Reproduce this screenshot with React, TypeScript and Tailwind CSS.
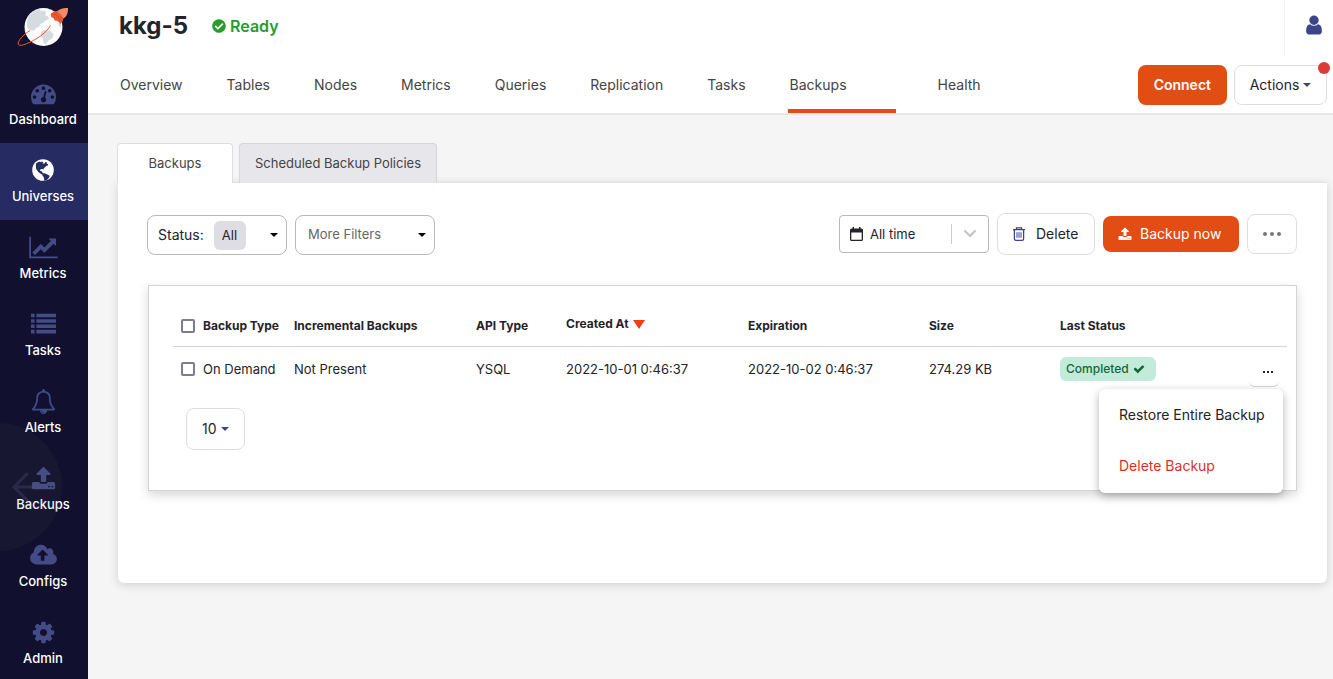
import type { ReactNode } from 'react';
import { clsx } from 'clsx';
import { FaCheckCircle } from 'react-icons/fa';

const ICONS = {
  dashboard:
    'M384 1152q0-53-37.5-90.5t-90.5-37.5-90.5 37.5-37.5 90.5 37.5 90.5 90.5 37.5 90.5-37.5 37.5-90.5zm192-448q0-53-37.5-90.5t-90.5-37.5-90.5 37.5-37.5 90.5 37.5 90.5 90.5 37.5 90.5-37.5 37.5-90.5zm428 481l101-382q6-26-7.5-48.5t-38.5-29.5-48 6.5-30 39.5l-101 382q-60 5-107 43.5t-63 98.5q-20 77 20 146t117 89 146-20 89-117q16-60-6-117t-72-91zm660-33q0-53-37.5-90.5t-90.5-37.5-90.5 37.5-37.5 90.5 37.5 90.5 90.5 37.5 90.5-37.5 37.5-90.5zm-640-640q0-53-37.5-90.5t-90.5-37.5-90.5 37.5-37.5 90.5 37.5 90.5 90.5 37.5 90.5-37.5 37.5-90.5zm448 192q0-53-37.5-90.5t-90.5-37.5-90.5 37.5-37.5 90.5 37.5 90.5 90.5 37.5 90.5-37.5 37.5-90.5zm320 448q0 261-141 483-19 29-54 29h-1402q-35 0-54-29-141-221-141-483 0-182 71-348t191-286 286-191 348-71 348 71 286 191 191 286 71 348z',
  chart:
    'M2048 1536v128h-2048v-1536h128v1408h1920zm-128-1248v435q0 21-19.5 29.5t-35.5-7.5l-121-121-633 633q-10 10-23 10t-23-10l-233-233-416 416-192-192 585-585q10-10 23-10t23 10l233 233 464-464-121-121q-16-16-7.5-35.5t29.5-19.5h435q14 0 23 9t9 23z',
  list:
    'M0 1280h256v256h-256zM0 896h256v256h-256zM0 512h256v256h-256zM0 128h256v256h-256zM384 1280h1408v256h-1408zM384 896h1408v256h-1408zM384 512h1408v256h-1408zM384 128h1408v256h-1408z',
  bell:
    'M912 1696q0-16-16-16-59 0-101.5-42.5t-42.5-101.5q0-16-16-16t-16 16q0 73 51.5 124.5t124.5 51.5q16 0 16-16zm-666-288h1300q-266-300-266-832 0-51-24-105t-69-103-121.5-80.5-169.5-31.5-169.5 31.5-121.5 80.5-69 103-24 105q0 532-266 832zm1482 0q0 52-38 90t-90 38h-448q0 106-75 181t-181 75-181-75-75-181h-448q-52 0-90-38t-38-90q50-42 91-88t85-119.5 74.5-158.5 50-206 19.5-260q0-152 117-282.5t307-158.5q-8-19-8-39 0-40 28-68t68-28 68 28 28 68q0 20-8 39 190 28 307 158.5t117 282.5q0 139 19.5 260t50 206 74.5 158.5 85 119.5 91 88z',
  upload:
    'M1344 1472q0-26-19-45t-45-19-45 19-19 45 19 45 45 19 45-19 19-45zm256 0q0-26-19-45t-45-19-45 19-19 45 19 45 45 19 45-19 19-45zm128-224v320q0 40-28 68t-68 28h-1472q-40 0-68-28t-28-68v-320q0-40 28-68t68-28h427q21 56 70.5 92t110.5 36h256q61 0 110.5-36t70.5-92h427q40 0 68 28t28 68zm-325-648q-17 40-59 40h-256v448q0 26-19 45t-45 19h-256q-26 0-45-19t-19-45v-448h-256q-42 0-59-40-17-39 14-69l448-448q18-19 45-19t45 19l448 448q31 30 14 69z',
  cloud:
    'M1280 864q0-14-9-23l-352-352q-9-9-23-9t-23 9l-351 351q-10 12-10 24 0 14 9 23t23 9h224v352q0 13 9.5 22.5t22.5 9.5h192q13 0 22.5-9.5t9.5-22.5v-352h224q13 0 22.5-9.5t9.5-22.5zm640 288q0 159-112.5 271.5t-271.5 112.5h-1088q-185 0-316.5-131.5t-131.5-316.5q0-130 70-240t188-165q-2-30-2-43 0-212 150-362t362-150q156 0 285.5 87t188.5 231q71-62 166-62 106 0 181 75t75 181q0 76-41 138 130 31 213.5 135.5t83.5 238.5z',
  cog:
    'M1152 896q0-106-75-181t-181-75-181 75-75 181 75 181 181 75 181-75 75-181zm512-109v222q0 12-8 23t-20 13l-185 28q-19 54-39 91 35 50 107 138 10 12 10 25t-9 23q-27 37-99 108t-94 71q-12 0-26-9l-138-108q-44 23-91 38-16 136-29 186-7 28-36 28h-222q-14 0-24.5-8.5t-11.5-21.5l-28-184q-49-16-90-37l-141 107q-10 9-25 9-14 0-25-11-126-114-165-168-7-10-7-23 0-12 8-23 15-21 51-66.5t54-70.5q-27-50-41-99l-183-27q-13-2-21-12.5t-8-23.5v-222q0-12 8-23t19-13l186-28q14-46 39-92-40-57-107-138-10-12-10-24 0-10 9-23 26-36 98.5-107.5t94.5-71.5q13 0 26 10l138 107q44-23 91-38 16-136 29-186 7-28 36-28h222q14 0 24.5 8.5t11.5 21.5l28 184q49 16 90 37l142-107q9-9 24-9 13 0 25 10 129 119 165 170 7 8 7 22 0 12-8 23-15 21-51 66.5t-54 70.5q26 50 41 98l183 28q13 2 21 12.5t8 23.5z',
  user:
    'M1536 1399q0 109-62.5 187t-150.5 78h-854q-88 0-150.5-78t-62.5-187q0-85 8.5-160.5t31.5-152 58.5-131 94-89 134.5-34.5q131 128 313 128t313-128q76 0 134.5 34.5t94 89 58.5 131 31.5 152 8.5 160.5zm-256-887q0 159-112.5 271.5t-271.5 112.5-271.5-112.5-112.5-271.5 112.5-271.5 271.5-112.5 271.5 112.5 112.5 271.5z',
  check:
    'M1671 566q0 40-28 68l-724 724-136 136q-28 28-68 28t-68-28l-136-136-362-362q-28-28-28-68t28-68l136-136q28-28 68-28t68 28l294 295 656-657q28-28 68-28t68 28l136 136q28 28 28 68z',
};

function Glyph({ name, className, viewBox = '0 0 1792 1792' }: { name: keyof typeof ICONS; className?: string; viewBox?: string }) {
  return (
    <svg viewBox={viewBox} className={className} fill="currentColor" aria-hidden="true">
      <path d={ICONS[name]} />
    </svg>
  );
}

function Globe() {
  return (
    <svg viewBox="0 0 24 24" className="size-6" aria-hidden="true">
      <circle cx="12" cy="12" r="10.8" fill="#fff" />
      <path
        fill="#262b62"
        d="M5 5.600 6.800 4.200 9 3.400l.6.8 1.200-.6 1.400.6-.6 1.200 1.600.2.9-.6.2-1.200 1.600.6-.2 1 1.400.8-.1 1.200-1.400.4-1.300 1.100-1.300 1-.5 1.600-1.200-.6-1.800.3-.4 1.600 1 .8.9-.6.3 1.400 1 .9 1.800.2 2.300 1 2.300 1.200-.7 2-1.600 1.700-1.600 1.200-1.400.3-.3-1.800-.4-2-1.200-1.300-.2-1.200-1.600-.8-1.800-1.300-1.600-2-1.200-1.700-.3-2.600Z"
      />
    </svg>
  );
}

function Logo() {
  return (
    <svg viewBox="0 0 52 42" className="h-[42px] w-[52px]" aria-hidden="true">
      <circle cx="26.5" cy="21" r="19" fill="#fdfdfd" />
      <path
        fill="#d5dbde"
        d="M12 9.500 17 5l5.500-2.200 1.500 2.400 3-.8 2 1.800-1 3 3 1.400 1 2.400-3.400 1.400-2.600 2.400-2.800 1.200-1 3-3 .8-2.200 3-3.600-.6-3-2.400-.8-4.400ZM24 26l4-2.200 5 1.200 3.600 3-1 4-4 2.600-2.600 3.400-2.600-1-.4-4.600-2.400-3ZM41 14l3 4 .6 4-2.800-2Z"
      />
      <path
        fill="none"
        stroke="#e8582f"
        strokeWidth="1"
        d="M13 24.500C6 29 .5 35 1.200 38.200 2 41.600 14 36.800 24 29.600 28 26.600 32 22.500 33.500 19.400"
      />
      <path fill="#e8582f" d="m33.600 8 3.200-2.600 5.200-1 4.600 5.200-.8 5.400-2.400 3-1.800-2.200-2-1-2-.2-1-2.600-2.200-.8Z" />
      <path fill="#f58a68" d="M40 6C42 3.400 45 2 51 2c.2 5-1.200 8.600-4.500 10.500Z" />
      <path fill="none" stroke="#c84a26" strokeWidth=".7" d="M36 8.400c3-.6 6.600 2.600 6.800 6.400M38.800 6.200c3.400.2 6 2.800 6.200 6" />
    </svg>
  );
}

function Caret({ className }: { className?: string }) {
  return (
    <svg viewBox="0 0 8 4" className={clsx('h-1 w-2 shrink-0', className)} fill="currentColor" aria-hidden="true">
      <path d="M0 0h8L4 4z" />
    </svg>
  );
}

const navItems: { label: string; icon: ReactNode; active?: boolean }[] = [
  { label: 'Dashboard', icon: <Glyph name="dashboard" className="size-[25px]" /> },
  { label: 'Universes', icon: <Globe />, active: true },
  { label: 'Metrics', icon: <Glyph name="chart" viewBox="0 0 2048 1792" className="h-[25px] w-[29px]" /> },
  { label: 'Tasks', icon: <Glyph name="list" className="size-[25px]" /> },
  { label: 'Alerts', icon: <Glyph name="bell" className="size-[25px]" /> },
  { label: 'Backups', icon: <Glyph name="upload" className="size-[25px]" /> },
  { label: 'Configs', icon: <Glyph name="cloud" viewBox="0 0 1920 1792" className="h-[25px] w-[27px]" /> },
  { label: 'Admin', icon: <Glyph name="cog" className="size-[25px]" /> },
];

const tabs = ['Overview', 'Tables', 'Nodes', 'Metrics', 'Queries', 'Replication', 'Tasks', 'Backups', 'Health'];

function Sidebar() {
  return (
    <aside className="relative h-screen w-[88px] shrink-0 overflow-hidden bg-[#11112f] text-[#444c88]">
      <a href="#home" aria-label="Home" className="flex h-[66px] items-start justify-center pt-1.5 pr-0.5">
        <Logo />
      </a>
      <nav>
        {navItems.map((item) => (
          <a
            key={item.label}
            href={`#${item.label.toLowerCase()}`}
            className={clsx('flex h-[77px] flex-col items-center pt-[15px] pr-0.5', item.active && 'bg-[#262b62]')}
          >
            <span className="flex h-6 items-center justify-center">{item.icon}</span>
            <span className="mt-[5px] text-[13px] leading-[18px] font-medium text-white">{item.label}</span>
          </a>
        ))}
      </nav>
      {/* Back gesture indicator */}
      <svg viewBox="0 0 64 130" className="pointer-events-none absolute top-[422px] left-0 h-[130px] w-16" aria-hidden="true">
        <circle cx="-2" cy="65" r="64" fill="#555" fillOpacity=".09" />
        <path d="M40 65H14M27 52 14 65l13 13" fill="none" stroke="#55557a" strokeOpacity=".3" strokeWidth="3" strokeLinecap="round" />
      </svg>
    </aside>
  );
}

function Header() {
  return (
    <header className="flex h-[115px] flex-col border-b-2 border-[#e8e8e8] bg-white">
      <div className="flex h-14 items-start justify-between">
        <div className="flex h-[52px] items-center gap-6 pl-[31px]">
          <h1 className="text-2xl font-bold text-[#232329]">kkg-5</h1>
          <span className="flex items-center gap-1 text-base font-semibold text-[#289b2e]">
            <FaCheckCircle className="size-3.5" />
            Ready
          </span>
        </div>
        <button type="button" aria-label="Account" className="flex h-14 w-[49px] items-start justify-end border-l border-[#f0f0f0] pt-3.5 pr-2 text-[#3d4489]">
          <Glyph name="user" className="size-[22px]" />
        </button>
      </div>
      <div className="flex flex-1 items-stretch justify-between pr-1.5 pl-[30px]">
        <nav className="flex gap-10">
          {tabs.map((tab) => (
            <a
              key={tab}
              href={`#${tab.toLowerCase()}`}
              className={clsx(
                'border-b-4 px-0.5 pt-[18px] text-sm leading-[22px] text-[#444444]',
                tab === 'Backups' ? 'w-[108px] border-[#e24d13]' : 'border-transparent',
              )}
            >
              {tab}
            </a>
          ))}
        </nav>
        <div className="flex gap-[7px] pt-[9px]">
          <button type="button" className="h-10 rounded-lg bg-[#e24d13] px-4 text-sm font-semibold text-white">
            Connect
          </button>
          <button type="button" className="relative flex h-10 w-[93px] items-center justify-center gap-1 rounded-lg border border-[#dedee0] text-sm text-[#232329]">
            Actions
            <Caret className="text-[#3d4489]" />
            <span className="absolute -top-1 -right-1 size-3 rounded-full bg-[#dc3c37]" />
          </button>
        </div>
      </div>
    </header>
  );
}

function Toolbar() {
  return (
    <div className="flex items-center justify-between">
      <div className="mt-0.5 flex gap-2">
        <label className="flex h-10 w-[140px] items-center rounded-lg border border-[#b9b9bd] pr-2 pl-2.5 text-sm text-[#232329]">
          Status:
          <select className="mr-auto ml-2.5 h-[29px] appearance-none rounded-md bg-[#dedde3] px-2 text-[13px]">
            <option>All</option>
          </select>
          <Caret className="text-black" />
        </label>
        <label className="flex h-10 w-[140px] items-center rounded-lg border border-[#b9b9bd] pr-2 pl-3 text-[#666666]">
          <select aria-label="More Filters" className="mr-auto appearance-none text-[13px]">
            <option>More Filters</option>
          </select>
          <Caret className="text-black" />
        </label>
      </div>

      <div className="flex items-center gap-2 text-sm text-[#232329]">
        <label className="flex h-[38px] w-[150px] items-center rounded border border-[#b9b9bd] pl-2.5">
          <svg viewBox="0 0 13 14" className="h-3.5 w-[13px]" aria-hidden="true">
            <path fill="#232329" fillRule="evenodd" d="M1.500 1.500h10A1.500 1.500 0 0 1 13 3v9.500A1.500 1.500 0 0 1 11.500 14h-10A1.500 1.500 0 0 1 0 12.500V3A1.500 1.500 0 0 1 1.500 1.500ZM1.300 5.500v7.200h10.400V5.500Z" />
            <path fill="#232329" d="M2.500 0H4v3H2.500ZM9 0h1.500v3H9Z" />
          </svg>
          <select aria-label="Time range" className="mr-auto ml-[7px] appearance-none text-[13px]">
            <option>All time</option>
          </select>
          <span className="h-5 w-px bg-[#cccccc]" />
          <svg viewBox="0 0 12 8" className="mx-3 h-2 w-3" fill="none" stroke="#c4c4c4" strokeWidth="2" strokeLinecap="round" aria-hidden="true">
            <path d="m1 1 5 5 5-5" />
          </svg>
        </label>
        <button type="button" className="flex h-[42px] w-[98px] items-center gap-[11px] rounded-lg border border-[#dedee0] pl-[15px]">
          <svg viewBox="0 0 12 14" className="h-3.5 w-3" fill="none" stroke="#3d4489" strokeWidth="1.3" aria-hidden="true">
            <path d="M0 2.700h12M3.500 2.700V.8h5v1.900M1.400 2.700v9q0 1.600 1.600 1.600h6q1.600 0 1.600-1.600v-9" />
            <path strokeWidth="1" d="M4 5.200v5.600M6 5.200v5.600M8 5.200v5.600" />
          </svg>
          Delete
        </button>
        <button type="button" className="flex h-9 w-[136px] items-center gap-2 rounded-lg bg-[#e24d13] pl-[15px] text-white">
          <Glyph name="upload" className="size-3.5" />
          Backup now
        </button>
        <button type="button" aria-label="More options" className="flex h-10 w-[50px] items-center justify-center gap-[3px] rounded-lg border border-[#dedee0]">
          <span className="size-1 rounded-full bg-[#777777]" />
          <span className="size-1 rounded-full bg-[#777777]" />
          <span className="size-1 rounded-full bg-[#777777]" />
        </button>
      </div>
    </div>
  );
}

function Checkbox({ label }: { label: string }) {
  return <input type="checkbox" aria-label={label} className="ml-2 block size-3.5 appearance-none rounded-xs border-2 border-[#7e7b93]" />;
}

function BackupsTable() {
  return (
    <div className="mt-[30px] ml-px border border-[#d4d4d4] pt-4 pr-[9px] pb-10 pl-6 shadow-[0_4px_10px_rgba(0,0,0,0.16)]">
      <table className="w-full table-fixed text-left text-[13px] text-[#232329]">
        <colgroup>
          <col className="w-[30px]" />
          <col className="w-[91px]" />
          <col className="w-[182px]" />
          <col className="w-[90px]" />
          <col className="w-[182px]" />
          <col className="w-[181px]" />
          <col className="w-[131px]" />
          <col />
        </colgroup>
        <thead>
          <tr className="h-11 border-b border-[#d4d4d4] text-xs whitespace-nowrap">
            <th className="pt-1"><Checkbox label="Select all backups" /></th>
            <th className="pt-1">Backup Type</th>
            <th className="pt-1">Incremental Backups</th>
            <th className="pt-1">API Type</th>
            <th aria-sort="descending">
              Created At
              <svg viewBox="0 0 12 9" className="ml-1 inline h-[9px] w-3" aria-hidden="true">
                <path d="M0 0h12L6 9z" fill="#ef3e14" />
              </svg>
            </th>
            <th className="pt-1">Expiration</th>
            <th className="pt-1">Size</th>
            <th className="pt-1">Last Status</th>
          </tr>
        </thead>
        <tbody>
          <tr className="h-[46px] whitespace-nowrap">
            <td><Checkbox label="Select backup" /></td>
            <td>On Demand</td>
            <td>Not Present</td>
            <td>YSQL</td>
            <td>2022-10-01 0:46:37</td>
            <td>2022-10-02 0:46:37</td>
            <td>274.29 KB</td>
            <td>
              <div className="relative flex items-center justify-between pr-2">
                <span className="flex h-6 w-24 items-center gap-1 rounded-md bg-[#c2ecd9] pl-1.5 text-xs font-medium text-[#13673a]">
                  Completed
                  <Glyph name="check" className="size-3" />
                </span>
                <button type="button" aria-label="Backup actions" aria-expanded="true" className="flex h-9 w-[30px] items-center justify-center gap-0.5 rounded-md border-b border-[#d4d4d4] pt-1.5 pl-2">
                  <span className="size-0.5 bg-[#232329]" />
                  <span className="size-0.5 bg-[#232329]" />
                  <span className="size-0.5 bg-[#232329]" />
                </button>
                <div role="menu" className="absolute top-full right-1 z-10 mt-0.5 w-[184px] rounded-md bg-white pb-px shadow-[0_3px_8px_rgba(0,0,0,0.3)]">
                  <button type="button" role="menuitem" className="block h-[51px] w-full px-5 text-left text-sm">
                    Restore Entire Backup
                  </button>
                  <button type="button" role="menuitem" className="block h-[52px] w-full px-5 text-left text-sm text-[#dc2f2a]">
                    Delete Backup
                  </button>
                </div>
              </div>
            </td>
          </tr>
        </tbody>
      </table>
      <label className="mt-4 ml-[13px] flex h-[42px] w-[59px] items-center gap-1 rounded-lg border border-[#dedee0] pl-[15px] text-[#232329]">
        <select aria-label="Rows per page" className="appearance-none text-sm">
          <option>10</option>
        </select>
        <Caret className="text-[#3d4489]" />
      </label>
    </div>
  );
}

export default function App() {
  return (
    <div className="flex h-screen overflow-hidden bg-[#f5f5f5] font-['Inter',sans-serif]">
      <Sidebar />
      <div className="min-w-0 flex-1">
        <Header />
        <main className="pt-7 pr-1.5 pl-[29px]">
          <div className="flex gap-1.5 text-[13px] text-[#444444]">
            <button type="button" className="relative z-10 -mb-px h-10 w-[116px] rounded-t border border-b-0 border-[#dedee0] bg-white">
              Backups
            </button>
            <button type="button" className="h-10 rounded-t border border-b-0 border-[#d6d5db] bg-[#e7e6eb] px-[15px]">
              Scheduled Backup Policies
            </button>
          </div>
          <section className="-mt-px ml-px rounded-b-md border-t border-[#e4e4e6] bg-white pt-[30px] pr-[30px] pb-[92px] pl-[29px] shadow-[0_2px_10px_rgba(0,0,0,0.15)]">
            <Toolbar />
            <BackupsTable />
          </section>
        </main>
      </div>
    </div>
  );
}
